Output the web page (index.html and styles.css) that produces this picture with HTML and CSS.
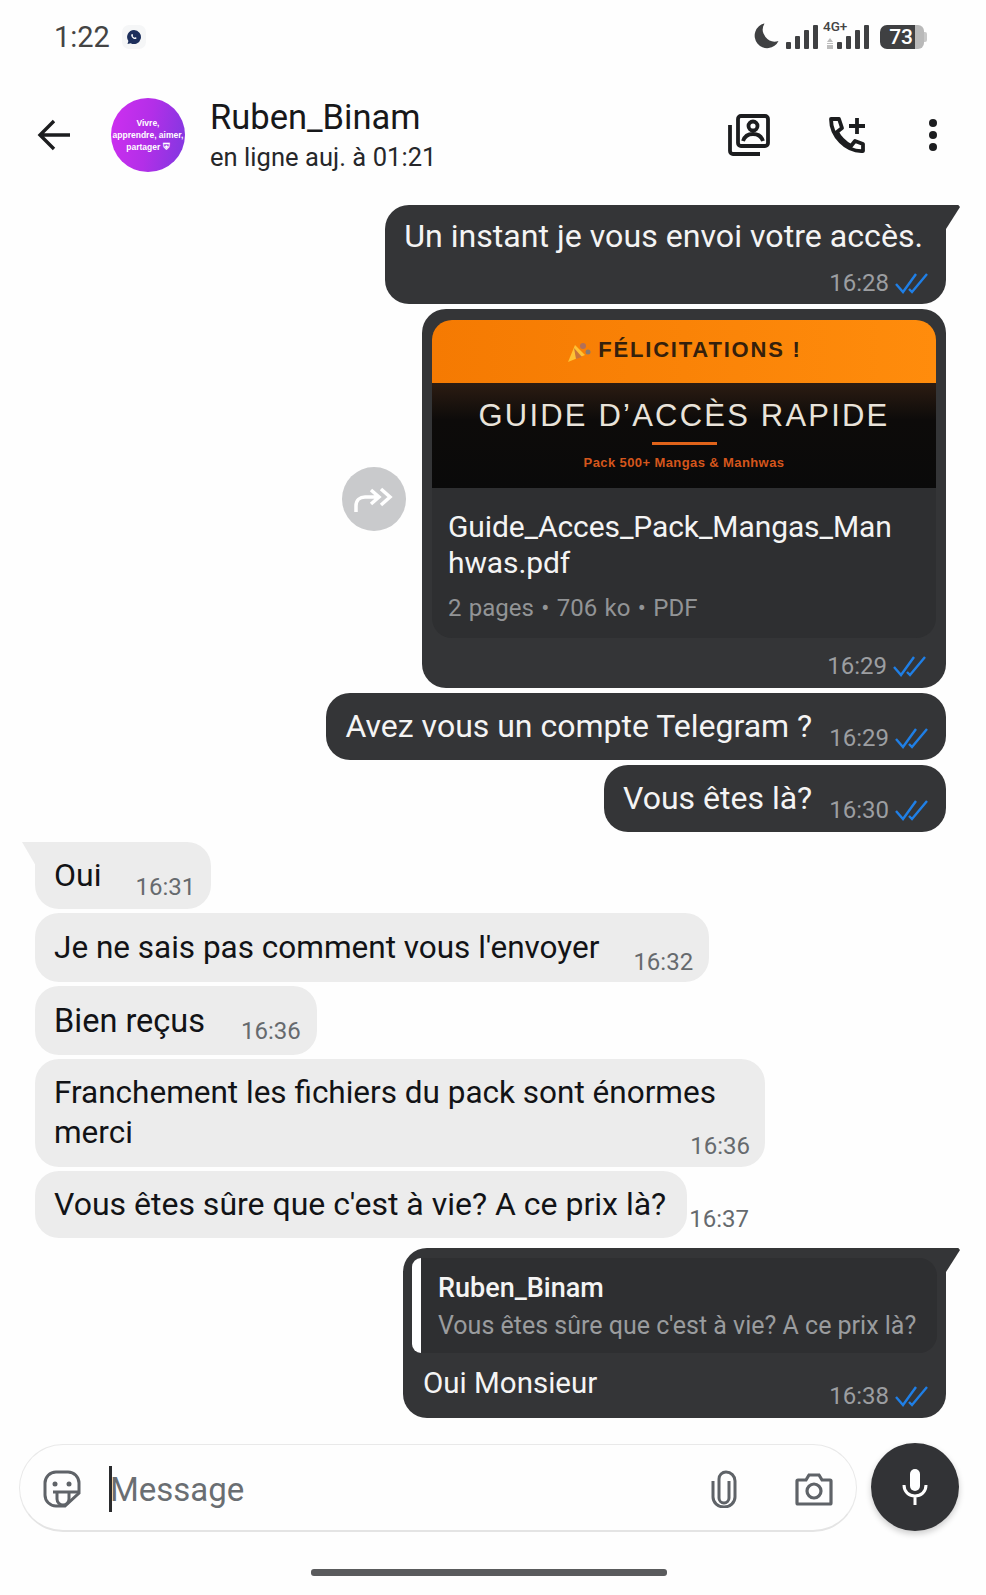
FILE: index.html
```html
<!DOCTYPE html>
<html lang="fr">
<head>
<meta charset="utf-8">
<title>Ruben_Binam</title>
<link rel="stylesheet" href="styles.css">
</head>
<body>
<div class="phone">
  <svg width="0" height="0" class="defs"><defs>
    <symbol id="ticks" viewBox="0 0 33 22"><path d="M1 12l7 8L21 2M14 17l3 3L32 2" fill="none" stroke="currentColor" stroke-width="2.400"/></symbol>
  </defs></svg>

  <div class="status">
    <div class="status-left">
      <span class="clock">1:22</span>
      <span class="notif"><svg viewBox="0 0 16 16" width="16" height="16"><path d="M8 1a7 7 0 1 1-3.300 13.200L1.500 15l.9-3A7 7 0 0 1 8 1z" fill="#1d2f5c"/><path d="M5.600 5.200c.5-.5 1-.4 1.200.2l.3.8-.5.7c.4.8 1 1.400 1.900 1.800l.7-.5.9.4c.5.3.5.8 0 1.200-1.800 1.400-6.100-2.400-4.500-4.600z" fill="#fff"/></svg></span>
    </div>
    <div class="status-right">
      <svg class="moon" viewBox="0 0 26 26" width="26" height="26"><path d="M11.500 0.500A12.500 12.500 0 1 0 25.500 18 12 12 0 0 1 11.500 0.500z" fill="#3f4042"/></svg>
      <svg viewBox="0 0 32 24" width="32" height="24"><g fill="#3f4042"><rect x="0" y="17" width="5" height="7" rx="1"/><rect x="9" y="11" width="5" height="13" rx="1"/><rect x="18" y="5" width="5" height="19" rx="1"/><rect x="27" y="0" width="5" height="24" rx="1"/></g></svg>
      <div class="net">
        <span class="net-label">4G+</span>
        <svg viewBox="0 0 46 24" width="46" height="24"><g fill="#bdbdbd"><path d="M6 13l3 4H3zM3 18h6v1H3z"/><rect x="3" y="20" width="6" height="4"/></g><g fill="#3f4042"><rect x="13" y="17" width="5" height="7" rx="1"/><rect x="22" y="11" width="5" height="13" rx="1"/><rect x="31" y="5" width="5" height="19" rx="1"/><rect x="40" y="0" width="5" height="24" rx="1"/></g></svg>
      </div>
      <div class="battery"><span class="battery-fill">73</span><span class="battery-rest"></span><span class="battery-cap"></span></div>
    </div>
  </div>

  <header class="top">
    <svg class="back" viewBox="0 0 34 32" width="34" height="32"><path d="M33 16H3M17 2L3 16l14 14" fill="none" stroke="#1c1d1f" stroke-width="3.400"/></svg>
    <div class="avatar"><span>Vivre,<br>apprendre, aimer,<br>partager ⛨</span></div>
    <div class="who">
      <div class="name">Ruben_Binam</div>
      <div class="seen">en ligne auj. à 01:21</div>
    </div>
    <div class="actions">
      <svg viewBox="0 0 42 42" width="42" height="42" fill="none" stroke="#1c1d1f" stroke-width="3.800"><rect x="10" y="2" width="30" height="30" rx="3"/><circle cx="25" cy="12" r="4.500"/><path d="M15 27c2-6 6-7 10-7s8 1 10 7"/><path d="M2 11v26a3 3 0 0 0 3 3h27"/></svg>
      <svg viewBox="0 0 38 38" width="38" height="38" fill="none" stroke="#1c1d1f" stroke-width="3.800"><path d="M2 3h8l3 9-5 4c3 6 7 10 14 14l4-5 8 3v7C17 36 2 20 2 3z" stroke-linejoin="round"/><path d="M28 2v16M20 10h16"/></svg>
      <svg class="dots" viewBox="0 0 8 32" width="8" height="32"><g fill="#1c1d1f"><circle cx="4" cy="4" r="4"/><circle cx="4" cy="16" r="4"/><circle cx="4" cy="28" r="4"/></g></svg>
    </div>
  </header>

  <main class="chat">
    <div class="msg out tail stack">
      <div class="text">Un instant je vous envoi votre accès.</div>
      <div class="meta"><span class="time">16:28</span><svg class="tick"><use href="#ticks"/></svg></div>
    </div>

    <div class="doc-row">
      <div class="forward"><svg viewBox="0 0 40 30" width="40" height="30" fill="none" stroke="#fff" stroke-width="3.500"><path d="M2 28v-6c0-6 4-9 9-9h12M17 6l8 7-8 7M27 5l9 8-9 8"/></svg></div>
      <div class="doc out">
        <div class="card">
          <div class="thumb">
            <div class="thumb-top">
              <svg viewBox="0 0 26 26" width="26" height="26"><path d="M2 25l7-17 10 10z" fill="#ffc233"/><path d="M8 11l8 9-6 2z" fill="#c9743a"/><circle cx="17" cy="9" r="3" fill="#b0705a"/><circle cx="22" cy="15" r="2.500" fill="#8a7a70"/></svg>
              <span>FÉLICITATIONS !</span>
            </div>
            <div class="thumb-main">
              <div class="guide">GUIDE D’ACCÈS RAPIDE</div>
              <div class="rule"></div>
              <div class="pack">Pack 500+ Mangas &amp; Manhwas</div>
            </div>
          </div>
          <div class="file">
            <div class="file-name">Guide_Acces_Pack_Mangas_Man<br>hwas.pdf</div>
            <div class="file-meta">2 pages • 706 ko • PDF</div>
          </div>
        </div>
        <div class="meta"><span class="time">16:29</span><svg class="tick"><use href="#ticks"/></svg></div>
      </div>
    </div>

    <div class="msg out line">
      <div class="text">Avez vous un compte Telegram ?</div>
      <div class="meta"><span class="time">16:29</span><svg class="tick"><use href="#ticks"/></svg></div>
    </div>
    <div class="msg out line">
      <div class="text">Vous êtes là?</div>
      <div class="meta"><span class="time">16:30</span><svg class="tick"><use href="#ticks"/></svg></div>
    </div>

    <div class="msg in line tail group">
      <div class="text">Oui</div>
      <div class="meta"><span class="time">16:31</span></div>
    </div>
    <div class="msg in line tall tight follow">
      <div class="text">Je ne sais pas comment vous l'envoyer</div>
      <div class="meta low"><span class="time">16:32</span></div>
    </div>
    <div class="msg in line tall wide follow">
      <div class="text">Bien reçus</div>
      <div class="meta"><span class="time">16:36</span></div>
    </div>
    <div class="msg in multi tight follow">
      <div class="text">Franchement les fichiers du pack sont énormes<br>merci</div>
      <div class="meta"><span class="time">16:36</span></div>
    </div>
    <div class="in-row follow">
      <div class="msg in line">
        <div class="text">Vous êtes sûre que c'est à vie? A ce prix là?</div>
      </div>
      <span class="time outside">16:37</span>
    </div>

    <div class="reply out tail group">
      <div class="quote">
        <div class="quote-bar"></div>
        <div class="quote-body">
          <div class="quote-name">Ruben_Binam</div>
          <div class="quote-text">Vous êtes sûre que c'est à vie? A ce prix là?</div>
        </div>
      </div>
      <div class="reply-body">
        <div class="text">Oui Monsieur</div>
        <div class="meta"><span class="time">16:38</span><svg class="tick"><use href="#ticks"/></svg></div>
      </div>
    </div>
  </main>

  <div class="composer">
    <div class="field">
      <svg class="sticker" viewBox="0 0 38 38" width="38" height="38" fill="none" stroke="#5f6368" stroke-width="3"><path d="M13 2h12a11 11 0 0 1 11 11v10L22 36h-9A11 11 0 0 1 2 25V13A11 11 0 0 1 13 2z"/><path d="M10 22h26M14 22v7a6 6 0 0 0 12 0v-6"/><circle cx="12" cy="14" r="2.500" fill="#5f6368" stroke="none"/><circle cx="26" cy="14" r="2.500" fill="#5f6368" stroke="none"/></svg>
      <div class="input"><span class="caret"></span><span class="placeholder">Message</span></div>
      <svg class="clip" viewBox="0 0 28 38" width="28" height="38" fill="none" stroke="#5f6368" stroke-width="3"><path d="M19 11v17a5 5 0 0 1-10 0V9a7 7 0 0 1 7-7a9 9 0 0 1 9 9v16a11 10 0 0 1-22 0V11"/></svg>
      <svg class="camera" viewBox="0 0 38 34" width="38" height="34" fill="none" stroke="#5f6368" stroke-width="3.200"><path d="M3 8h8l3-5h10l3 5h8a1 1 0 0 1 1 1v22a1 1 0 0 1-1 1H3a1 1 0 0 1-1-1V9a1 1 0 0 1 1-1z"/><circle cx="19" cy="19" r="7"/></svg>
    </div>
    <div class="mic"><svg viewBox="0 0 26 38" width="26" height="38"><rect x="8" y="1" width="10" height="22" rx="5" fill="#fff"/><path d="M2 17c0 7 5 11 11 11s11-4 11-11M13 28v9" fill="none" stroke="#fff" stroke-width="3"/></svg></div>
  </div>
  <div class="home-wrap"><div class="home"></div></div>
</div>
</body>
</html>
```

FILE: styles.css
```css
* { box-sizing: border-box; }
html, body { margin: 0; padding: 0; }
body {
  font-family: Roboto, "Liberation Sans", sans-serif;
  background: #fefefe;
  color: #17181a;
}
.phone {
  width: 986px;
  height: 1595px;
  display: flex;
  flex-direction: column;
  overflow: hidden;
}
.defs { display: block; height: 0; }

/* Status bar */
.status {
  height: 74px;
  display: flex;
  justify-content: space-between;
  align-items: flex-start;
  padding: 20px 59px 0 54px;
}
.status-left { display: flex; align-items: center; gap: 12px; height: 34px; }
.clock { font-size: 29px; line-height: 34px; color: #444; }
.notif {
  width: 24px; height: 24px; border-radius: 7px;
  background: #f5f6f7;
  display: flex; align-items: center; justify-content: center;
}
.status-right { display: flex; align-items: flex-end; gap: 7px; height: 29px; }
.net { position: relative; margin-left: -1px; }
.net svg { display: block; }
.net-label {
  position: absolute; left: -1px; top: -6px;
  font-size: 13.500px; line-height: 14px; font-weight: 500; color: #444;
}
.status-right > svg { display: block; }
.battery { display: flex; align-items: center; height: 24px; margin-left: 3px; }
.battery-fill {
  width: 35px; height: 24px;
  background: #3f4042; color: #fff;
  border-radius: 7px 0 0 7px;
  font-size: 21px; line-height: 24px; font-weight: 500; text-align: right; padding-right: 2px;
}
.battery-rest { width: 9px; height: 24px; background: #b9b9b9; border-radius: 0 6px 6px 0; }
.battery-cap { width: 3px; height: 10px; background: #c9c9c9; border-radius: 0 2px 2px 0; }

/* Header */
.top {
  height: 122px;
  display: flex;
  align-items: center;
  padding: 0 49px 0 37px;
}
.avatar {
  width: 74px; height: 74px; border-radius: 50%;
  margin-left: 40px;
  background: linear-gradient(100deg, #cf2ff0 0%, #b32fe8 50%, #7e38e0 100%);
  color: #fff;
  display: flex; align-items: center; justify-content: center;
  text-align: center;
  font: 700 8.500px/12px "Liberation Sans", sans-serif;
  white-space: nowrap;
}
.who { margin-left: 25px; margin-top: 3px; flex: 1; }
.name { font-size: 34.500px; line-height: 38px; color: #17181a; }
.seen { font-size: 25.500px; line-height: 36px; color: #26272a; letter-spacing: 0.050px; margin-top: 3px; }
.actions { display: flex; align-items: center; }
.actions svg { display: block; }
.actions svg + svg { margin-left: 59px; }
.actions .dots { margin-left: 62px; }

/* Chat */
.chat {
  flex: 1;
  display: flex;
  flex-direction: column;
  gap: 5px;
  padding: 9px 40px 0 35px;
}
.msg, .doc, .reply { position: relative; border-radius: 24px; font-size: 32px; line-height: 40px; }
.out { align-self: flex-end; background: #343537; color: #f4f4f4; }
.in { align-self: flex-start; background: #ececec; color: #121316; }
.tight { font-size: 31.500px; }
.follow { margin-top: -1px; }
.tail::before {
  content: ""; position: absolute; top: 0;
  width: 14px; height: 24px;
}
.out.tail { border-top-right-radius: 0; }
.in.tail { border-top-left-radius: 0; }
.out.tail::before { right: -14px; background: #343537; clip-path: polygon(0 0, 88% 0, 100% 8%, 0 100%); }
.in.tail::before { left: -13px; background: #ececec; clip-path: polygon(0 0, 100% 0, 100% 100%); }
.group { margin-top: 5px; }

.time { font-size: 24px; line-height: 28px; white-space: nowrap; }
.out .time { color: #9c9ea1; }
.in .time, .time.outside { color: #666a6e; }
.meta { display: flex; align-items: center; gap: 6px; flex: none; }
.tick { width: 33px; height: 22px; color: #1f7fe6; display: block; }

.line { display: flex; align-items: flex-end; gap: 17px; padding: 13px 18px 14px 19px; }
.line .meta { margin-bottom: -6px; }
.in.line { gap: 34px; padding-right: 16px; }
.in.tall { height: 69px; padding-top: 12px; }
.in.tall .meta { margin-bottom: -4px; }
.in.tall .meta.low { margin-bottom: -8px; }
.in.wide { font-size: 32.500px; gap: 36px; }

.stack { padding: 11px 23px 0 19px; height: 99px; font-size: 32.150px; }
.stack .meta { justify-content: flex-end; margin-top: 13px; margin-right: -5px; }

/* Document */
.doc-row { display: flex; justify-content: flex-end; align-items: center; gap: 16px; }
.forward {
  width: 64px; height: 64px; border-radius: 50%;
  background: #c9cacc;
  display: flex; align-items: center; justify-content: center;
}
.doc { width: 524px; height: 379px; padding: 11px 10px 0; }
.card { height: 318px; background: #2e2f31; border-radius: 20px; overflow: hidden; }
.thumb-top {
  height: 63px;
  background: linear-gradient(90deg, #f57a02, #ff8c0c);
  display: flex; align-items: center; justify-content: center; gap: 6px;
  padding: 0 0 4px 0;
  font: 700 22px/1 "Liberation Sans", sans-serif;
  letter-spacing: 1.800px;
  color: #35200c;
}
.thumb-main {
  height: 105px;
  background: linear-gradient(180deg, #2c1c12 0%, #0d0b0a 35%, #0a0a0a 100%);
  display: flex; flex-direction: column; align-items: center;
}
.guide {
  margin-top: 15px;
  font: 400 31px/36px "Liberation Sans", sans-serif;
  letter-spacing: 2.200px;
  color: #e9e3da;
}
.rule { width: 65px; height: 3px; background: #e0631a; margin-top: 8px; }
.pack {
  margin-top: 10px;
  font: 700 13px/16px "Liberation Sans", sans-serif;
  letter-spacing: 0.400px;
  color: #d5561c;
}
.file { padding: 21px 16px 0; }
.file-name { font-size: 30px; line-height: 36px; color: #f4f4f4; letter-spacing: -0.100px; }
.file-meta { font-size: 24px; line-height: 30px; color: #929496; margin-top: 12px; word-spacing: 1.400px; }
.doc .meta { justify-content: flex-end; margin-top: 14px; padding-right: 10px; }

/* Incoming */
.multi { padding: 14px 15px 0 19px; height: 108px; width: 730px; }
.multi .meta { justify-content: flex-end; margin-top: -21px; }
.in-row { display: flex; align-items: flex-end; gap: 2px; align-self: flex-start; }
.in-row .msg { padding-right: 21px; }
.time.outside { margin-bottom: 5px; }

/* Reply */
.reply { width: 543px; height: 170px; padding: 10px 9px 0; }
.quote { height: 95px; display: flex; }
.quote-bar { width: 9px; background: #fff; border-radius: 12px 0 0 12px; }
.quote-body {
  flex: 1;
  background: #2e2f31;
  border-radius: 0 18px 18px 0;
  padding: 11px 0 0 17px;
}
.quote-name { font-size: 27px; line-height: 38px; font-weight: 500; color: #f4f4f4; }
.quote-text { font-size: 25px; line-height: 38px; color: #9a9c9e; white-space: nowrap; }
.reply-body { display: flex; justify-content: space-between; align-items: flex-end; padding: 10px 9px 0 11px; font-size: 29.500px; }
.reply-body .meta { margin-bottom: -7px; }

/* Composer */
.composer {
  height: 102px;
  display: flex;
  align-items: flex-start;
  padding: 0 27px 0 19px;
  gap: 14px;
}
.field {
  width: 838px; height: 88px;
  margin-top: 1px;
  border: 1px solid #e9e9e9;
  border-bottom: 2px solid #e4e4e4;
  border-radius: 44px;
  background: #fefefe;
  display: flex; align-items: center;
  padding: 0 23px 0 23px;
}
.sticker { flex: none; margin-top: 2px; }
.input { flex: 1; display: flex; align-items: center; margin-left: 28px; height: 46px; margin-top: 3px; }
.caret { width: 3px; height: 46px; background: #2a2b2d; }
.placeholder { font-size: 33px; line-height: 46px; color: #6a6e72; margin-top: 2px; margin-left: -2px; }
.clip { flex: none; margin-top: 2px; }
.camera { flex: none; margin-left: 57px; margin-top: 2px; }
.mic {
  width: 88px; height: 88px; border-radius: 50%;
  background: #323336;
  box-shadow: 0 3px 6px rgba(0,0,0,.2);
  display: flex; align-items: center; justify-content: center;
}
.home-wrap { height: 50px; display: flex; justify-content: center; padding-right: 8px; }
.home { width: 356px; height: 7px; border-radius: 3px; background: #5a5b5d; margin-top: 24px; }
```
